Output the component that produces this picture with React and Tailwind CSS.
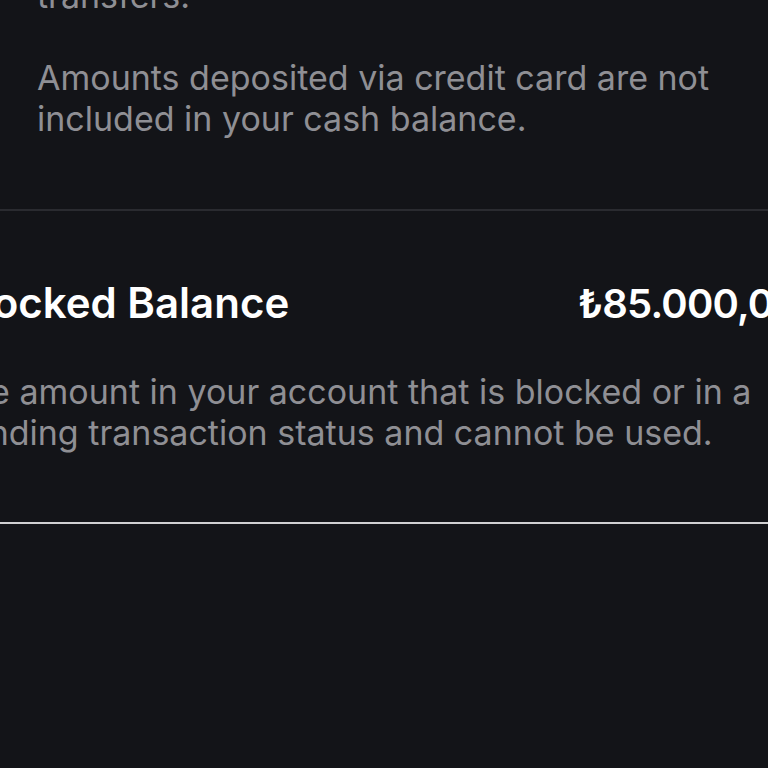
export default function App() {
  return (
    <div
      className="relative w-[768px] h-[768px] overflow-hidden bg-[#131418]"
      style={{ fontFamily: "Inter, 'Noto Sans', sans-serif" }}
    >
      {/* Cash balance note */}
      <div className="pl-[37px] pr-4 -mt-[25px] text-[34px] leading-[41px] text-[#8f8f94]">
        <p>transfers.</p>
        <p className="mt-[41px]">
          Amounts deposited via credit card are not
          <br />
          included in your cash balance.
        </p>
      </div>

      <div className="mt-[70px] h-[2px] bg-[#2a2b30]" />

      {/* Blocked balance */}
      <div className="-ml-[46px] w-[900px] pt-[67px] pb-[69px]">
        <div className="flex items-baseline text-[42px] leading-[50px] font-semibold text-white">
          <span className="w-[624px] shrink-0">Blocked Balance</span>
          <span className="whitespace-nowrap text-[40px] tracking-[-0.8px]">₺85.000,00</span>
        </div>
        <p className="mt-[42px] -ml-[6px] text-[34px] leading-[41px] text-[#8f8f94]">
          The amount in your account that is blocked or in a
          <br />
          pending transaction status and cannot be used.
        </p>
      </div>

      <div className="h-[2px] bg-[#d0d0d2]" />
    </div>
  );
}
